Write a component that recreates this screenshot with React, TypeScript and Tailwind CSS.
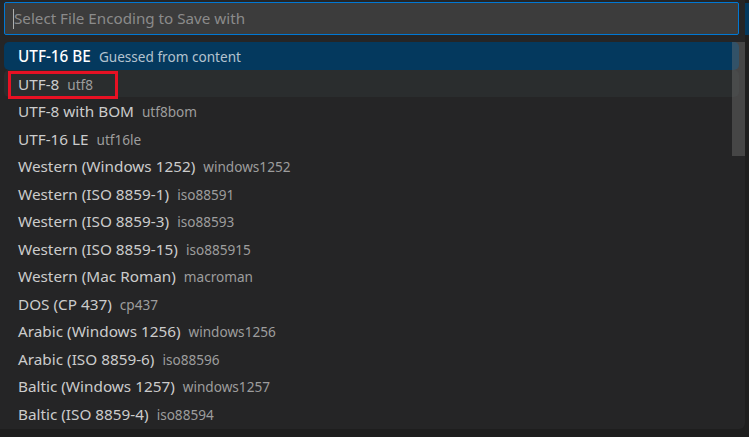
import React from "react";

const items: { label: string; desc: string }[] = [
  { label: "UTF-16 BE", desc: "Guessed from content" },
  { label: "UTF-8", desc: "utf8" },
  { label: "UTF-8 with BOM", desc: "utf8bom" },
  { label: "UTF-16 LE", desc: "utf16le" },
  { label: "Western (Windows 1252)", desc: "windows1252" },
  { label: "Western (ISO 8859-1)", desc: "iso88591" },
  { label: "Western (ISO 8859-3)", desc: "iso88593" },
  { label: "Western (ISO 8859-15)", desc: "iso885915" },
  { label: "Western (Mac Roman)", desc: "macroman" },
  { label: "DOS (CP 437)", desc: "cp437" },
  { label: "Arabic (Windows 1256)", desc: "windows1256" },
  { label: "Arabic (ISO 8859-6)", desc: "iso88596" },
  { label: "Baltic (Windows 1257)", desc: "windows1257" },
  { label: "Baltic (ISO 8859-4)", desc: "iso88594" },
];

export default function App() {
  return (
    <div
      className="w-[749px] h-[437px] bg-[#1e1e1e] flex overflow-hidden"
      style={{ fontFamily: '"Segoe UI", "Noto Sans", sans-serif' }}
    >
      <div className="relative w-[745px] h-[429px] bg-[#252526] rounded-br-[6px] flex flex-col">
        <div className="mt-[2px] ml-[4px] w-[735px] h-[33px] bg-[#3c3c3c] border border-[#0078d4] rounded-[2px] flex items-center pl-[8px]">
          <div className="w-[1px] h-[20px] bg-[#aeafad]" />
          <span className="text-[15.2px] text-[#8b8b8b]">Select File Encoding to Save with</span>
        </div>
        <div className="mt-[7px] ml-[4px] w-[735px] flex flex-col">
          {items.map((it, i) => (
            <div
              key={i}
              className={
                "h-[27.5px] flex items-center pl-[14px] pt-[2px] rounded-[5px] " +
                (i === 0
                  ? "bg-[#04395e] text-white"
                  : i === 1
                  ? "bg-[#2a2d2e] text-[#cccccc]"
                  : "text-[#cccccc]")
              }
            >
              <div className="flex items-baseline">
                <span className={"text-[15.3px] " + (i === 0 ? "font-medium" : "")}>{it.label}</span>
                <span
                  className={
                    "ml-[8px] text-[13.6px] " + (i === 0 ? "text-[#b4c3cf]" : "text-[#9d9d9d]")
                  }
                >
                  {it.desc}
                </span>
              </div>
            </div>
          ))}
        </div>
        <div className="absolute left-[8px] top-[71px] w-[110px] h-[28px] border-[3px] border-[#e81123]" />
        <div className="absolute left-[732px] top-[42px] w-[13px] h-[114px] bg-[rgba(121,121,121,0.4)]" />
      </div>
      <div className="w-[4px] h-full flex flex-col">
        <div className="h-[3px]" />
        <div className="h-[32px] bg-[#04395e]" />
      </div>
    </div>
  );
}
